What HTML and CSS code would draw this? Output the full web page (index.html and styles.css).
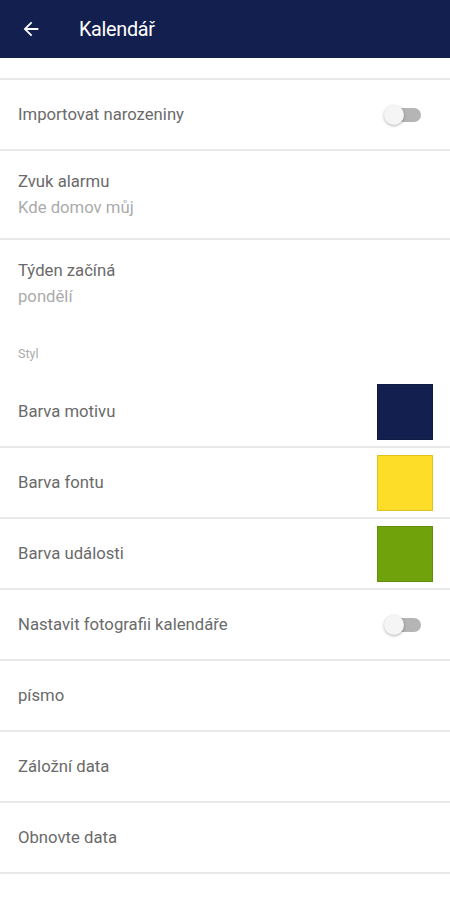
FILE: index.html
```html
<!DOCTYPE html>
<html lang="cs">
<head>
  <meta charset="UTF-8">
  <title>Kalendář</title>
  <link rel="stylesheet" href="styles.css">
</head>
<body>
  <header class="appbar">
    <svg class="back" width="22" height="22" viewBox="0 0 24 24">
      <path d="M20 11H7.83l5.59-5.59L12 4l-8 8 8 8 1.41-1.41L7.83 13H20v-2z" fill="#fff"/>
    </svg>
    <h1>Kalendář</h1>
  </header>

  <div class="spacer"></div>

  <ul class="settings">
    <li class="row">
      <span class="title">Importovat narozeniny</span>
      <span class="switch"><span class="thumb"></span></span>
    </li>
    <li class="row two-line">
      <span class="title">Zvuk alarmu</span>
      <span class="sub">Kde domov můj</span>
    </li>
    <li class="row two-line no-line">
      <span class="title">Týden začíná</span>
      <span class="sub">pondělí</span>
    </li>
    <li class="category">Styl</li>
    <li class="row">
      <span class="title">Barva motivu</span>
      <span class="swatch navy"></span>
    </li>
    <li class="row">
      <span class="title">Barva fontu</span>
      <span class="swatch yellow"></span>
    </li>
    <li class="row">
      <span class="title">Barva události</span>
      <span class="swatch green"></span>
    </li>
    <li class="row">
      <span class="title">Nastavit fotografii kalendáře</span>
      <span class="switch"><span class="thumb"></span></span>
    </li>
    <li class="row"><span class="title">písmo</span></li>
    <li class="row"><span class="title">Záložní data</span></li>
    <li class="row"><span class="title">Obnovte data</span></li>
  </ul>
</body>
</html>
```

FILE: styles.css
```css
body {
  margin: 0;
  font-family: Roboto, "Noto Sans", sans-serif;
  background: #ffffff;
  color: #6a6a6a;
}
.appbar {
  height: 58px;
  background: #131f4f;
  display: flex;
  align-items: center;
  padding-left: 20px;
}
.back {
  display: block;
}
.appbar h1 {
  margin: 0 0 0 37px;
  font-size: 19.8px;
  font-weight: 400;
  color: #fff;
  letter-spacing: -0.3px;
}
.spacer {
  height: 20px;
}
.settings {
  list-style: none;
  margin: 0;
  padding: 0;
  border-top: 2px solid #e8e8e8;
}
.row {
  height: 69px;
  border-bottom: 2px solid #e8e8e8;
  display: flex;
  align-items: center;
  justify-content: space-between;
  padding: 0 17px 0 18px;
}
.title {
  font-size: 16.7px;
  color: #6a6a6a;
}
.two-line {
  height: auto;
  flex-direction: column;
  align-items: flex-start;
  justify-content: flex-start;
  padding-top: 18px;
  padding-bottom: 17px;
  line-height: 26px;
}
.sub {
  font-size: 16.7px;
  color: #ababab;
}
.no-line {
  border-bottom: none;
}
.category {
  height: 50px;
  box-sizing: border-box;
  padding: 19px 18px 0;
  font-size: 12.5px;
  color: #ababab;
}
.swatch {
  width: 56px;
  height: 56px;
  box-sizing: border-box;
  border: 1px solid rgba(0, 0, 0, 0.12);
}
.navy { background: #131f4f; }
.yellow { background: #fddd27; }
.green { background: #70a20b; }
.switch {
  position: relative;
  width: 34px;
  height: 14px;
  border-radius: 7px;
  background: #b5b5b5;
  margin-right: 12px;
}
.thumb {
  position: absolute;
  left: -3px;
  top: -3px;
  width: 20px;
  height: 20px;
  border-radius: 50%;
  background: #f5f5f5;
  box-shadow: 0 1px 3px rgba(0, 0, 0, 0.3);
}
```
